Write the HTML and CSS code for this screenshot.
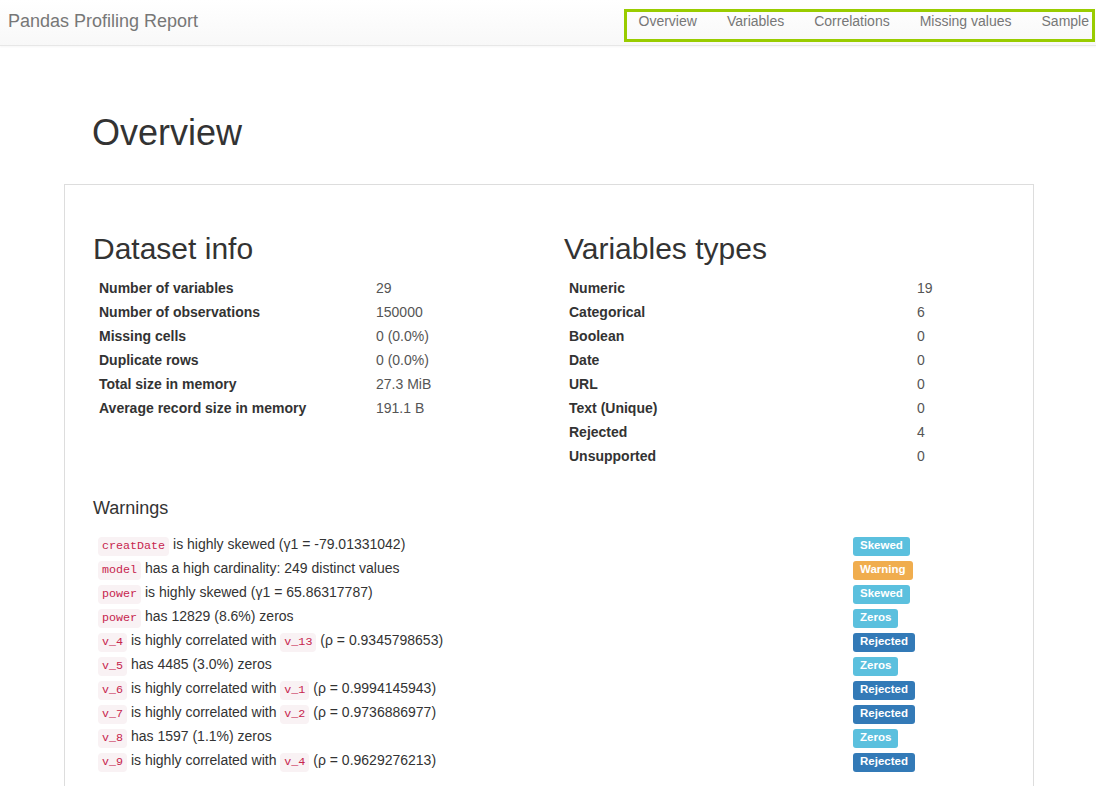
FILE: index.html
```html
<!DOCTYPE html>
<html lang="en">
<head>
<meta charset="utf-8">
<title>Pandas Profiling Report</title>
<link rel="stylesheet" href="styles.css">
</head>
<body>
<nav class="navbar">
  <a class="brand" href="#">Pandas Profiling Report</a>
  <ul class="nav">
    <li><a href="#overview">Overview</a></li>
    <li><a href="#variables">Variables</a></li>
    <li><a href="#correlations">Correlations</a></li>
    <li><a href="#missing">Missing values</a></li>
    <li><a href="#sample">Sample</a></li>
  </ul>
</nav>

<main class="page">
  <h1 class="page-title">Overview</h1>
  <section class="panel">
    <div class="cols">
      <div class="col">
        <h2 class="section-title">Dataset info</h2>
        <table class="stats stats-left">
          <tr><th>Number of variables</th><td>29</td></tr>
          <tr><th>Number of observations</th><td>150000</td></tr>
          <tr><th>Missing cells</th><td>0 (0.0%)</td></tr>
          <tr><th>Duplicate rows</th><td>0 (0.0%)</td></tr>
          <tr><th>Total size in memory</th><td>27.3 MiB</td></tr>
          <tr><th>Average record size in memory</th><td>191.1 B</td></tr>
        </table>
      </div>
      <div class="col">
        <h2 class="section-title">Variables types</h2>
        <table class="stats stats-right">
          <tr><th>Numeric</th><td>19</td></tr>
          <tr><th>Categorical</th><td>6</td></tr>
          <tr><th>Boolean</th><td>0</td></tr>
          <tr><th>Date</th><td>0</td></tr>
          <tr><th>URL</th><td>0</td></tr>
          <tr><th>Text (Unique)</th><td>0</td></tr>
          <tr><th>Rejected</th><td>4</td></tr>
          <tr><th>Unsupported</th><td>0</td></tr>
        </table>
      </div>
    </div>

    <h3 class="warnings-title">Warnings</h3>
    <div class="warnings">
      <div class="warn-row"><div class="warn-text"><code>creatDate</code> is highly skewed (γ1 = -79.01331042)</div><div class="warn-tag"><span class="label label-info">Skewed</span></div></div>
      <div class="warn-row"><div class="warn-text"><code>model</code> has a high cardinality: 249 distinct values</div><div class="warn-tag"><span class="label label-warning">Warning</span></div></div>
      <div class="warn-row"><div class="warn-text"><code>power</code> is highly skewed (γ1 = 65.86317787)</div><div class="warn-tag"><span class="label label-info">Skewed</span></div></div>
      <div class="warn-row"><div class="warn-text"><code>power</code> has 12829 (8.6%) zeros</div><div class="warn-tag"><span class="label label-info">Zeros</span></div></div>
      <div class="warn-row"><div class="warn-text"><code>v_4</code> is highly correlated with <code>v_13</code> (ρ = 0.9345798653)</div><div class="warn-tag"><span class="label label-primary">Rejected</span></div></div>
      <div class="warn-row"><div class="warn-text"><code>v_5</code> has 4485 (3.0%) zeros</div><div class="warn-tag"><span class="label label-info">Zeros</span></div></div>
      <div class="warn-row"><div class="warn-text"><code>v_6</code> is highly correlated with <code>v_1</code> (ρ = 0.9994145943)</div><div class="warn-tag"><span class="label label-primary">Rejected</span></div></div>
      <div class="warn-row"><div class="warn-text"><code>v_7</code> is highly correlated with <code>v_2</code> (ρ = 0.9736886977)</div><div class="warn-tag"><span class="label label-primary">Rejected</span></div></div>
      <div class="warn-row"><div class="warn-text"><code>v_8</code> has 1597 (1.1%) zeros</div><div class="warn-tag"><span class="label label-info">Zeros</span></div></div>
      <div class="warn-row"><div class="warn-text"><code>v_9</code> is highly correlated with <code>v_4</code> (ρ = 0.9629276213)</div><div class="warn-tag"><span class="label label-primary">Rejected</span></div></div>
    </div>
  </section>
</main>
</body>
</html>
```

FILE: styles.css
```css
html {
  overflow: hidden;
}

body {
  margin: 0;
  font-family: "Liberation Sans", Arial, Helvetica, sans-serif;
  font-size: 14px;
  line-height: 20px;
  color: #333;
  background: #fff;
}

a {
  text-decoration: none;
}

/* Navbar */
.navbar {
  display: flex;
  align-items: flex-start;
  height: 45px;
  border-bottom: 1px solid #e7e7e7;
  background: linear-gradient(to bottom, #ffffff 0%, #f8f8f8 100%);
  box-shadow: 0 1px 2px rgba(0, 0, 0, 0.04);
  padding: 0 1px 0 8px;
}

.brand {
  margin-top: 11px;
  font-size: 18px;
  line-height: 20px;
  color: #777;
}

.nav {
  display: flex;
  list-style: none;
  margin: 9px 0 0 auto;
  padding: 0;
  height: 33px;
  box-sizing: border-box;
  outline: 3px solid #99cc00;
  outline-offset: -3px;
}

.nav a {
  display: block;
  padding: 2px 15px;
  line-height: 20px;
  color: #777;
}

.nav li:last-child a {
  padding-right: 6px;
}

/* Page */
.page {
  padding-left: 64px;
}

.page-title {
  margin: 67px 0 31px 28px;
  font-size: 36px;
  font-weight: 500;
  line-height: 1.1;
  color: #333;
}

.panel {
  width: 970px;
  box-sizing: border-box;
  border: 1px solid #ddd;
  border-bottom: none;
  padding: 47px 14px 40px 28px;
}

.cols {
  display: grid;
  grid-template-columns: 471px 1fr;
}

.section-title {
  margin: 0 0 11px;
  font-size: 30px;
  font-weight: 500;
  line-height: 1.1;
  color: #333;
}

.stats {
  border-collapse: collapse;
}

.stats th,
.stats td {
  padding: 2px 5px;
  line-height: 20px;
  text-align: left;
  vertical-align: middle;
}

.stats th {
  font-weight: bold;
  color: #333;
}

.stats td {
  color: #555;
}

.stats-left th {
  width: 267px;
  padding-left: 6px;
}

.stats-right th {
  width: 338px;
  padding-left: 5px;
}

.warnings-title {
  margin: 31px 0 15px;
  font-size: 18px;
  font-weight: 500;
  line-height: 1.1;
  color: #333;
}

.warn-row {
  display: grid;
  grid-template-columns: 755px 1fr;
  height: 24px;
  align-items: center;
}

.warn-text {
  padding: 0 5px;
  line-height: 20px;
  white-space: nowrap;
}

.warn-tag {
  padding-left: 5px;
  line-height: 20px;
}

code {
  font-family: "Liberation Mono", Consolas, monospace;
  font-size: 11.7px;
  padding: 2px 4px 3px;
  color: #c7254e;
  background: #f9f2f4;
  border-radius: 4px;
}

.label {
  display: inline-block;
  font-size: 11.5px;
  font-weight: bold;
  line-height: 1;
  padding: 3px 7px 4px;
  color: #fff;
  border-radius: 3px;
  vertical-align: middle;
}

.label-info {
  background: #5bc0de;
}

.label-warning {
  background: #f0ad4e;
}

.label-primary {
  background: #337ab7;
}
```
